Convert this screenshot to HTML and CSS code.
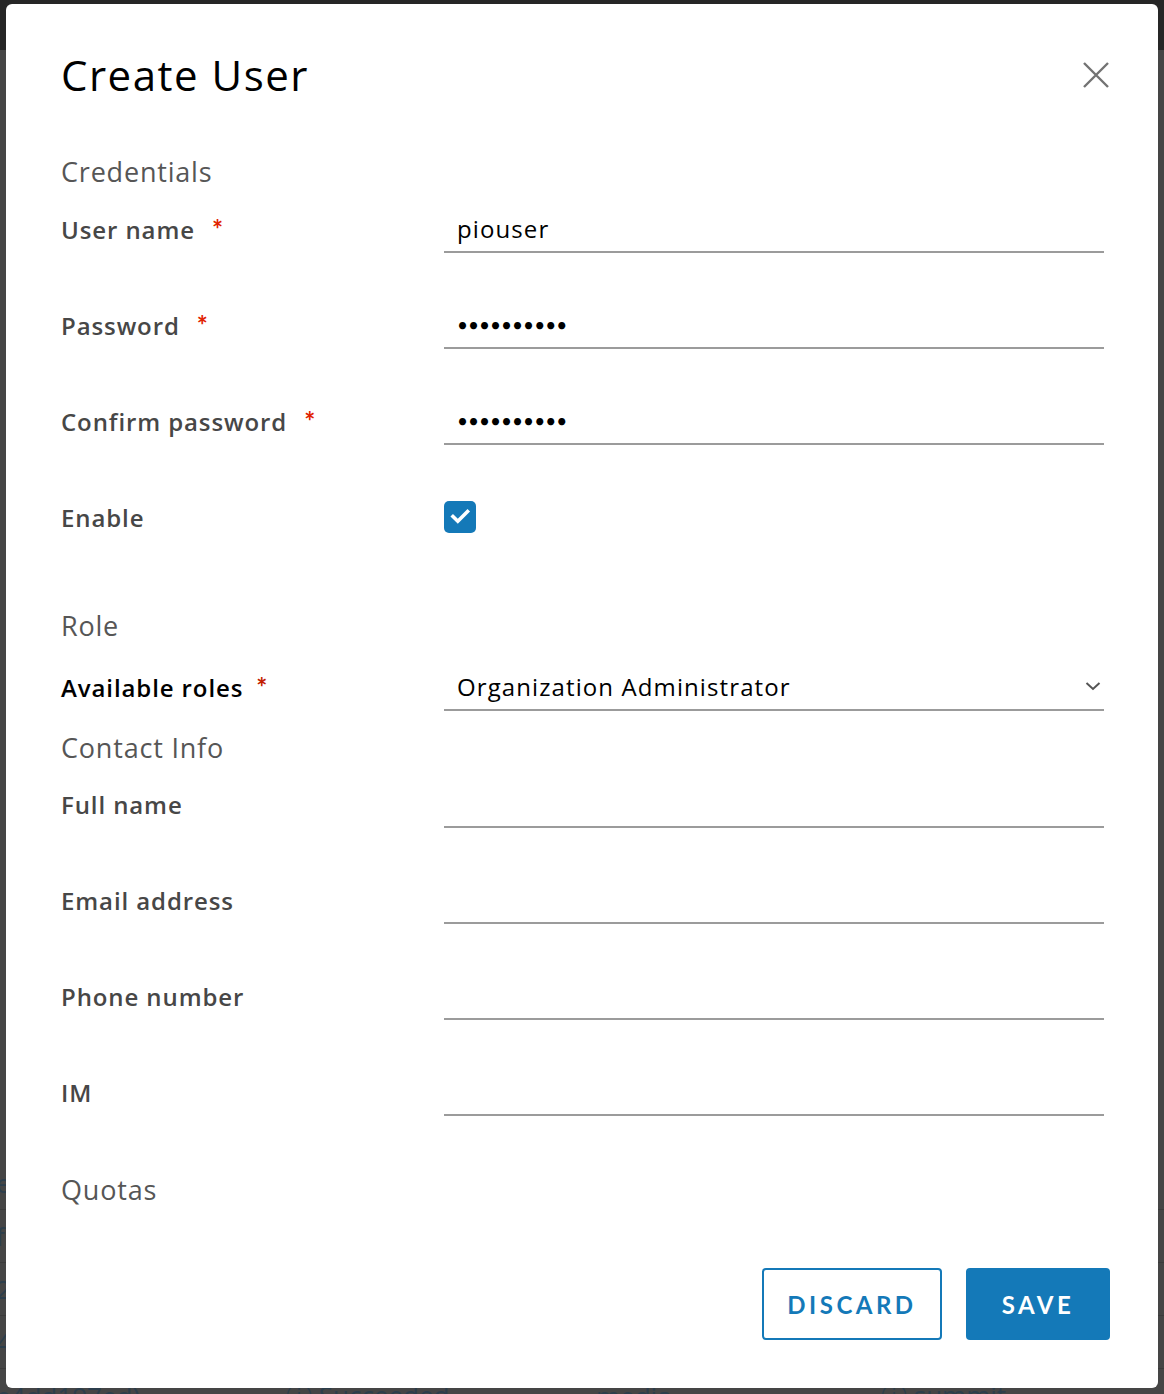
FILE: index.html
```html
<!DOCTYPE html>
<html lang="en">
<head>
<meta charset="utf-8">
<title>Create User</title>
<link rel="stylesheet" href="styles.css">
</head>
<body>
<div class="page">
  <div class="topbar"></div>
  <div class="content">
    <div class="bg-row"><span class="bg-c1">e</span></div>
    <div class="bg-row"><span class="bg-c1">f</span></div>
    <div class="bg-row"><span class="bg-c1">2</span></div>
    <div class="bg-row"><span class="bg-c1">4</span></div>
    <div class="bg-row">
      <span class="bg-c1">e4dd197ed)</span>
      <span class="bg-c2">ⓘ Succeeded</span>
      <span class="bg-c3">media</span>
      <span class="bg-c4">ⓘ summit</span>
    </div>
  </div>
</div>

<div class="modal" role="dialog">
  <div class="modal-header">
    <h1 class="modal-title">Create User</h1>
    <button class="close" aria-label="Close">
      <svg width="26" height="26" viewBox="0 0 26 26"><path d="M1 1 L25 25 M25 1 L1 25" stroke="#737373" stroke-width="2.4" fill="none"/></svg>
    </button>
  </div>

  <h2 class="section s-cred">Credentials</h2>
  <div class="field f-first">
    <label class="label">User name<span class="req">*</span></label>
    <input class="input" type="text" value="piouser">
  </div>
  <div class="field">
    <label class="label">Password<span class="req">*</span></label>
    <input class="input pw" type="password" value="abcdefghij">
  </div>
  <div class="field">
    <label class="label">Confirm password<span class="req">*</span></label>
    <input class="input pw" type="password" value="abcdefghij">
  </div>
  <div class="field">
    <label class="label">Enable</label>
    <div class="checkbox">
      <svg width="32" height="32" viewBox="0 0 32 32"><path d="M9 15.5 L13.8 20.2 L23.5 10.5" stroke="#fff" stroke-width="3.6" fill="none" stroke-linecap="square"/></svg>
    </div>
  </div>

  <h2 class="section s-role">Role</h2>
  <div class="field f-role">
    <label class="label dark">Available roles<span class="req dark-req">*</span></label>
    <div class="select">
      <span>Organization Administrator</span>
      <svg width="16" height="10" viewBox="0 0 16 10"><path d="M1.5 2 L8 8 L14.5 2" stroke="#555" stroke-width="2" fill="none"/></svg>
    </div>
  </div>

  <h2 class="section s-contact">Contact Info</h2>
  <div class="field f-contact">
    <label class="label">Full name</label>
    <input class="input" type="text">
  </div>
  <div class="field">
    <label class="label">Email address</label>
    <input class="input" type="text">
  </div>
  <div class="field">
    <label class="label">Phone number</label>
    <input class="input" type="text">
  </div>
  <div class="field">
    <label class="label">IM</label>
    <input class="input" type="text">
  </div>

  <h2 class="section s-quota">Quotas</h2>

  <div class="footer">
    <button class="btn btn-outline">DISCARD</button>
    <button class="btn btn-primary">SAVE</button>
  </div>
</div>
</body>
</html>
```

FILE: styles.css
```css
* { box-sizing: border-box; }

html, body {
  margin: 0;
  height: 100%;
  overflow: hidden;
}

body {
  background: #454545;
  font-family: "Open Sans", "Liberation Sans", sans-serif;
}

.page {
  height: 100vh;
  display: flex;
  flex-direction: column;
}

.topbar {
  height: 50px;
  background: #262626;
  flex: none;
}

.content {
  flex: 1;
  display: flex;
  flex-direction: column;
  justify-content: flex-end;
  margin-bottom: -28px;
}

.bg-row {
  height: 53px;
  border-bottom: 1px solid #3b3b3b;
  display: flex;
  align-items: center;
  font-size: 26px;
  color: #2c3e4c;
  white-space: nowrap;
}

.bg-row:last-child { border-bottom: none; }

.bg-c1 { width: 290px; margin-left: -4px; }
.bg-c2 { width: 310px; }
.bg-c3 { width: 285px; }

.modal {
  position: absolute;
  left: 6px;
  top: 4px;
  width: 1152px;
  background: #fff;
  border-radius: 6px;
  padding: 46px 54px 48px 55px;
}

.modal-header {
  display: flex;
  align-items: center;
  justify-content: space-between;
  height: 50px;
}

.modal-title {
  margin: 0;
  font-size: 42px;
  line-height: 50px;
  font-weight: 400;
  letter-spacing: 1.5px;
  color: #000;
}

.close {
  border: none;
  background: none;
  padding: 0;
  width: 26px;
  height: 26px;
  margin-right: -5px;
  display: flex;
}

.section {
  margin: 0;
  font-size: 27px;
  line-height: 34px;
  font-weight: 400;
  letter-spacing: 0.8px;
  color: #565656;
}

.s-cred { margin-top: 55px; }
.s-role { margin-top: 68px; }
.s-contact { margin-top: 20px; }
.s-quota { margin-top: 57px; }

.field {
  display: grid;
  grid-template-columns: 383px 1fr;
  align-items: center;
  height: 48px;
  margin-top: 48px;
}

.f-first { margin-top: 16px; }
.f-role { margin-top: 20px; }
.f-contact { margin-top: 15px; }

.label {
  font-size: 24px;
  font-weight: 600;
  letter-spacing: 0.9px;
  color: #474747;
}

.label.dark { color: #000; }

.req {
  color: #e12200;
  font-family: "Lato", sans-serif;
  font-size: 26px;
  font-weight: 700;
  letter-spacing: 0;
  margin-left: 17px;
  vertical-align: 0;
}

.req.dark-req { color: #c21d00; margin-left: 13px; }

.input {
  width: 100%;
  height: 48px;
  border: none;
  border-bottom: 2px solid #9b9b9b;
  padding: 0 13px;
  font-family: inherit;
  font-size: 24px;
  letter-spacing: 1.1px;
  color: #000;
  outline: none;
  background: transparent;
}

.input.pw {
  font-family: "Lato", sans-serif;
  font-size: 19px;
  letter-spacing: 0;
}

.checkbox {
  width: 32px;
  height: 32px;
  border-radius: 5px;
  background: #1479b8;
  display: flex;
}

.select {
  height: 48px;
  border-bottom: 2px solid #9b9b9b;
  padding: 0 3px 0 13px;
  display: flex;
  align-items: center;
  justify-content: space-between;
  font-size: 24px;
  letter-spacing: 1.1px;
  color: #000;
}

.footer {
  margin-top: 61px;
  margin-right: -6px;
  display: flex;
  justify-content: flex-end;
  gap: 24px;
}

.btn {
  height: 72px;
  border-radius: 4px;
  font-family: "Lato", sans-serif;
  font-size: 24px;
  font-weight: 700;
  letter-spacing: 3.5px;
  padding: 0;
}

.btn-outline {
  width: 180px;
  background: #fff;
  border: 2px solid #1479b8;
  color: #1479b8;
}

.btn-primary {
  width: 144px;
  background: #1479b8;
  border: none;
  color: #fff;
}
```
